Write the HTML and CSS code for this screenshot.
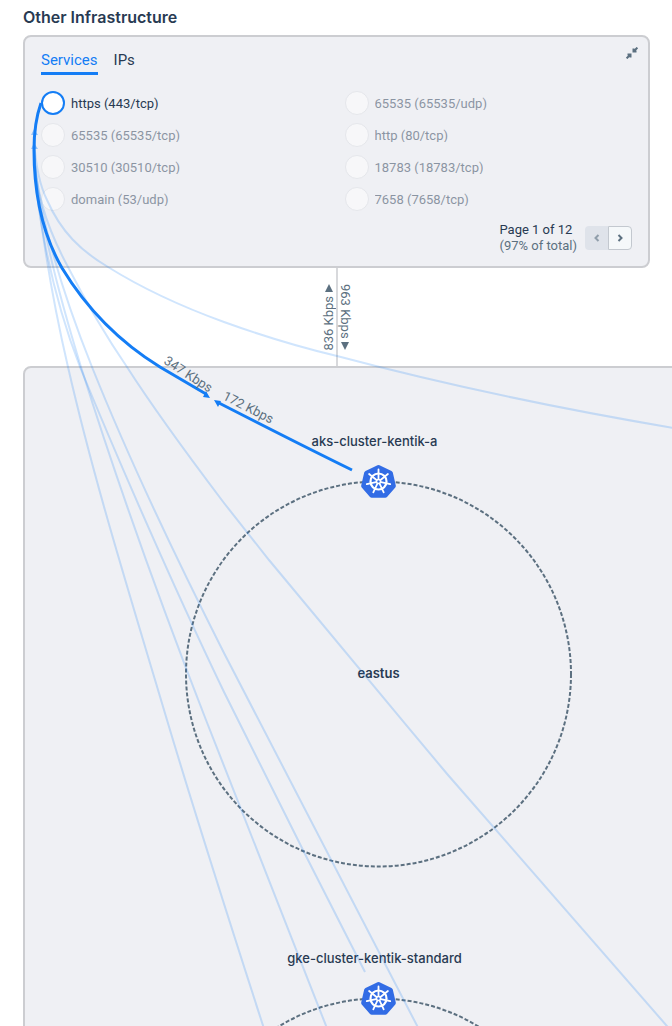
FILE: index.html
```html
<!DOCTYPE html>
<html lang="en">
<head>
    <meta charset="UTF-8">
    <meta name="viewport" content="width=device-width, initial-scale=1.0">
    <title>Other Infrastructure</title>
    <link rel="stylesheet" href="styles.css">
</head>
<body>

<main class="topology">
    <h1>Other Infrastructure</h1>

    <section class="panel">
        <button class="collapse" aria-label="Collapse">
            <svg width="12" height="12" viewBox="0 0 12 12">
                <path d="M11.4 .6L7.5 4.500M7.500 1.500V4.500H10.500M.6 11.400L4.500 7.500M1.500 7.500H4.500V10.500" />
            </svg>
        </button>
        <nav class="tabs">
            <a href="#services" class="active">Services</a>
            <a href="#ips">IPs</a>
        </nav>
        <ul class="services">
            <li class="selected"><i></i><span>https (443/tcp)</span></li>
            <li><i></i><span>65535 (65535/udp)</span></li>
            <li><i></i><span>65535 (65535/tcp)</span></li>
            <li><i></i><span>http (80/tcp)</span></li>
            <li><i></i><span>30510 (30510/tcp)</span></li>
            <li><i></i><span>18783 (18783/tcp)</span></li>
            <li><i></i><span>domain (53/udp)</span></li>
            <li><i></i><span>7658 (7658/tcp)</span></li>
        </ul>
        <div class="pager">
            <p>Page 1 of 12<br><span>(97% of total)</span></p>
            <div class="pager-buttons">
                <button disabled aria-label="Previous page">
                    <svg width="8" height="8" viewBox="0 0 8 8"><path d="M5.500 1L2.500 4L5.500 7" /></svg>
                </button>
                <button aria-label="Next page">
                    <svg width="8" height="8" viewBox="0 0 8 8"><path d="M2.500 1L5.500 4L2.500 7" /></svg>
                </button>
            </div>
        </div>
    </section>

    <div class="connector">
        <div class="rate up">
            <svg width="8" height="8" viewBox="0 0 8 8"><path d="M4 0L8 8H0Z" /></svg>
            <span>836 Kbps</span>
        </div>
        <div class="line"></div>
        <div class="rate down">
            <span>963 Kbps</span>
            <svg width="8" height="8" viewBox="0 0 8 8"><path d="M0 0H8L4 8Z" /></svg>
        </div>
    </div>

    <section class="cloud">
        <div class="cluster">
            <h2>aks-cluster-kentik-a</h2>
            <svg class="ring" width="387" height="408" viewBox="0 0 387 408">
                <circle class="dashed" cx="193.500" cy="211" r="192.500" />
                <use href="#k8s" x="175" y="1" width="37" height="34" />
                <text x="193.500" y="215">eastus</text>
            </svg>
        </div>
        <div class="cluster">
            <h2>gke-cluster-kentik-standard</h2>
            <svg class="ring" width="387" height="408" viewBox="0 0 387 408">
                <circle class="dashed" cx="193.500" cy="211" r="192.500" />
                <use href="#k8s" x="175" y="1" width="37" height="34" />
            </svg>
        </div>
    </section>

    <!-- traffic links -->
    <svg class="links" width="700" height="1040" viewBox="0 0 700 1040">
        <g class="faded">
            <path d="M34 140C36 170 41 188 47 200C61 232 81 251 108 267C140 287 180 306 224 322C260 335 299 347 337 356C450 386 560 409 680 429" />
            <path d="M34 140C34 190 46 226 68 267C85 300 103 332 127 367C150 403 190 458 224 503L269 560C300 598 380 694 448 775L680 1041" />
            <path d="M34 140C33 200 62 292 92 367C128 457 177 560 224 653C257 718 330 860 425 1041" />
            <path d="M34 140C33 200 51 292 80 367C118 460 175 590 224 692L308 860L365 972" />
            <path d="M34 140C33 200 58 292 81 367C118 485 160 602 206 720L332 1041" />
            <path d="M34 140C34 190 50 290 68 367C95 485 132 602 167 720C190 797 224 905 268 1041" />
        </g>
        <path class="tip faint" d="M31 135L34 129L38 135ZM31 149L34 143L38 149Z" />
        <path class="main" d="M41 103C35 120 34 135 34 150C34 195 43 235 62 268C82 301 113 338 160 367L206 394" />
        <path class="main" d="M219 403C260 424 305 447 352 470" />
        <path class="tip" d="M210 398L206 391L203 397ZM214 400L221 401L218 407Z" />
        <text transform="translate(163 363) rotate(33)">347 Kbps</text>
        <text transform="translate(222 399) rotate(27)">172 Kbps</text>
    </svg>
</main>

<!-- kubernetes wheel -->
<svg class="defs" width="0" height="0">
    <symbol id="k8s" viewBox="0 0 37 34">
        <path fill="#326ce5" d="M17.500 1.300Q18.500 .8 19.500 1.300L31.500 7Q32.500 7.500 32.800 8.600L35.800 21.500Q36 22.600 35.300 23.500L27 33Q26.300 33.700 25.300 33.700H11.700Q10.700 33.700 10 33L1.700 23.500Q1 22.600 1.200 21.500L4.200 8.600Q4.500 7.500 5.500 7Z" />
        <g fill="none" stroke="#fff" stroke-linecap="round">
            <circle cx="18.500" cy="17.500" r="8" stroke-width="2.200" />
            <path stroke-width="1.800" d="M18.500 15V5.500M20.500 16L27.900 10M21 18.100L30.200 20.200M19.600 19.700L23.700 28.300M17.400 19.700L13.300 28.300M16 18.100L6.800 20.200M16.500 16L9.100 10" />
            <circle cx="18.500" cy="17.500" r="2" stroke-width="1.500" />
        </g>
    </symbol>
</svg>

</body>
</html>
```
FILE: styles.css
```css
* {
    box-sizing: border-box;
}
body {
    margin: 0;
    background-color: #fff;
    color: #283a52;
    font-family: Roboto, sans-serif;
    font-size: 13px;
    line-height: 16px;
}
h1, h2, p, ul {
    margin: 0;
    padding: 0;
}
.topology {
    position: relative;
    height: 100vh;
    overflow: hidden;
    padding: 7px 22px 0 23px;
}
h1 {
    font-family: Inter, sans-serif;
    font-size: 16px;
    font-weight: 600;
    line-height: 20px;
    margin-bottom: 8px;
}
.panel, .cloud {
    background-color: #eff0f4;
    border: 2px solid #cccdd1;
    border-radius: 8px;
}
.panel {
    position: relative;
    padding: 12px 16px;
}
.tabs {
    display: flex;
    gap: 16px;
    margin-bottom: 16px;
}
.tabs a {
    color: #283a52;
    font-size: 15px;
    line-height: 23px;
    text-decoration: none;
    border-bottom: 3px solid transparent;
}
.tabs .active {
    color: #147df5;
    border-color: #147df5;
}
.collapse {
    position: absolute;
    top: 10px;
    right: 10px;
    display: flex;
    padding: 0;
    border: 0;
    background: none;
}
button path {
    fill: none;
    stroke: #5c7080;
    stroke-width: 2;
}
.services {
    list-style: none;
    display: grid;
    grid-template-columns: 1fr 1fr;
    gap: 8px 16px;
    margin-bottom: 11px;
}
.services li {
    display: flex;
    align-items: center;
    gap: 6px;
    height: 24px;
    opacity: 0.5;
}
.services i {
    width: 24px;
    height: 24px;
    border: 1px solid #dcdee3;
    border-radius: 50%;
    background-color: #fff;
}
.services span {
    height: 14px;
    overflow: hidden;
}
.services .selected {
    opacity: 1;
}
.services .selected i {
    border: 2px solid #147df5;
}
.pager {
    display: flex;
    justify-content: flex-end;
    align-items: center;
    gap: 8px;
}
.pager span {
    color: #5c7080;
}
.pager-buttons {
    display: flex;
}
.pager-buttons button {
    display: flex;
    align-items: center;
    justify-content: center;
    width: 24px;
    height: 24px;
    padding: 0;
    border: 1px solid #c3c8cf;
    border-radius: 0 4px 4px 0;
    background-color: #f5f8fa;
}
.pager-buttons button:disabled {
    width: 23px;
    border: 0;
    border-radius: 4px 0 0 4px;
    background-color: #dfe3ea;
}
.pager-buttons button:disabled path {
    opacity: 0.6;
}
.connector {
    display: flex;
    justify-content: center;
    align-items: center;
    height: 98px;
    color: #5c7080;
}
.line {
    width: 2px;
    height: 98px;
    background-color: #d8d9dc;
}
.rate {
    display: flex;
    flex-direction: column;
    align-items: center;
    gap: 4px;
    width: 14px;
}
.rate span {
    writing-mode: vertical-rl;
    line-height: 14px;
}
.rate.up span {
    transform: rotate(180deg);
}
.rate path {
    fill: #5c7080;
}
.cloud {
    width: 1400px;
    padding: 63px 0 0 160px;
}
.cluster {
    width: 387px;
    height: 517px;
    text-align: center;
}
h2 {
    font-family: Inter, sans-serif;
    font-size: 13px;
    font-weight: 500;
    line-height: 20px;
    margin-bottom: 12px;
    padding-right: 8px;
}
.ring {
    display: block;
}
.ring text {
    font-family: Inter, sans-serif;
    font-weight: 600;
    fill: #283a52;
    text-anchor: middle;
}
.dashed {
    fill: none;
    stroke: #5c7080;
    stroke-width: 2;
    stroke-dasharray: 4 2;
}
.links {
    position: absolute;
    top: 0;
    left: 0;
    pointer-events: none;
}
.links text {
    fill: #5c7080;
}
.faded path {
    fill: none;
    stroke: #147df5;
    stroke-width: 2;
    opacity: 0.2;
}
.main {
    fill: none;
    stroke: #147df5;
    stroke-width: 3;
}
.tip {
    fill: #147df5;
}
.faint {
    opacity: 0.4;
}
.defs {
    position: absolute;
}
```
